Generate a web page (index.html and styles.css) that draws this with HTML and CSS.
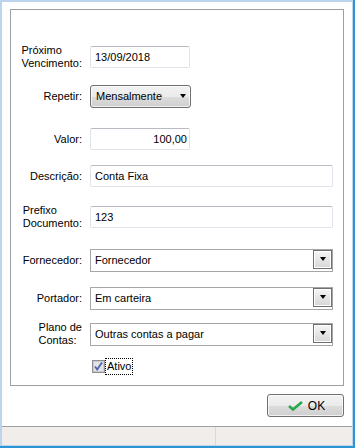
FILE: index.html
```html
<!DOCTYPE html>
<html lang="pt-BR">
<head>
  <meta charset="UTF-8" />
  <title>Conta Fixa</title>
  <link rel="stylesheet" href="styles.css">
</head>
<body>
  <div class="frame">
    <div class="window">

      <!-- Dados da conta -->
      <div class="group">
        <div class="row row-venc">
          <div class="label"><span>Próximo<br>Vencimento:</span></div>
          <div class="edit edit-short">13/09/2018</div>
        </div>

        <div class="row row-repetir">
          <div class="label"><span>Repetir:</span></div>
          <div class="dropbtn">
            <span>Mensalmente</span>
            <span class="arrow"></span>
          </div>
        </div>

        <div class="row row-valor">
          <div class="label"><span>Valor:</span></div>
          <div class="edit edit-short edit-right">100,00</div>
        </div>

        <div class="row row-desc">
          <div class="label"><span>Descrição:</span></div>
          <div class="edit">Conta Fixa</div>
        </div>

        <div class="row row-prefixo">
          <div class="label"><span>Prefixo<br>Documento:</span></div>
          <div class="edit">123</div>
        </div>

        <div class="row row-forn">
          <div class="label"><span>Fornecedor:</span></div>
          <div class="combo">
            <span class="combo-text">Fornecedor</span>
            <span class="combo-btn"><span class="arrow"></span></span>
          </div>
        </div>

        <div class="row row-port">
          <div class="label"><span>Portador:</span></div>
          <div class="combo">
            <span class="combo-text">Em carteira</span>
            <span class="combo-btn"><span class="arrow"></span></span>
          </div>
        </div>

        <div class="row row-plano">
          <div class="label"><span>Plano de<br>Contas:</span></div>
          <div class="combo">
            <span class="combo-text">Outras contas a pagar</span>
            <span class="combo-btn"><span class="arrow"></span></span>
          </div>
        </div>

        <div class="row row-check">
          <div class="label"></div>
          <div class="check">
            <svg class="check-box" width="13" height="13" viewBox="0 0 13 13">
              <rect x="0.5" y="0.5" width="12" height="12" fill="#f4f4f4" stroke="#8f8f8f"/>
              <rect x="1.5" y="1.5" width="10" height="10" fill="#e2e3e8" stroke="#c9cbd2"/>
              <path d="M3 6.5 L5.2 9.5 L10 2.5" fill="none" stroke="#4a63a8" stroke-width="1.8"/>
            </svg>
            <span class="check-label">Ativo</span>
          </div>
        </div>
      </div>

      <div class="actions">
        <button class="btn-ok">
          <svg width="15" height="10" viewBox="0 0 15 10">
            <path d="M1 5 L5 8.5 L14 1" fill="none" stroke="#27a84a" stroke-width="2.6"/>
          </svg>
          OK
        </button>
      </div>

      <div class="statusbar">
        <div class="panel panel-main"></div>
        <div class="panel"></div>
      </div>

    </div>
  </div>
</body>
</html>
```

FILE: styles.css
```css
html, body {
  margin: 0;
  padding: 0;
  background: #fff;
  font-family: "Liberation Sans", Arial, sans-serif;
  font-size: 11px;
  color: #000;
}

.frame {
  width: 355px;
  height: 448px;
  box-sizing: border-box;
  border-right: 2px solid #2b95d6;
  border-bottom: 2px solid #2b95d6;
}

.window {
  height: 100%;
  box-sizing: border-box;
  border: 2px solid #bcd4ec;
  border-right-width: 1px;
  border-bottom-width: 1px;
  display: flex;
  flex-direction: column;
  background: #fff;
}

.group {
  margin: 7px 0 0 8px;
  width: 334px;
  height: 377px;
  box-sizing: border-box;
  border: 1px solid #a0a0a0;
  padding: 36px 10px 0 0;
}

.row {
  display: flex;
  align-items: center;
  height: 22px;
}

.row-repetir { margin-top: 17px; }
.row-valor   { margin-top: 21px; }
.row-desc    { margin-top: 15px; }
.row-prefixo { margin-top: 19px; }
.row-forn    { margin-top: 21px; }
.row-port    { margin-top: 16px; }
.row-plano   { margin-top: 14px; }
.row-check   { margin-top: 10px; }

.label {
  width: 71px;
  flex: none;
  display: flex;
  justify-content: flex-end;
  margin-right: 8px;
  line-height: 13px;
}

.label span {
  text-align: left;
}

.edit {
  flex: 1;
  height: 22px;
  box-sizing: border-box;
  border: 1px solid #e0e3e9;
  border-top-color: #b8bbc2;
  border-radius: 2px;
  padding: 0 4px;
  line-height: 20px;
  white-space: nowrap;
}

.edit-short {
  flex: none;
  width: 100px;
}

.edit-right {
  text-align: right;
  padding-right: 2px;
}

.dropbtn {
  width: 101px;
  height: 23px;
  box-sizing: border-box;
  border: 1px solid #707070;
  border-radius: 3px;
  background: linear-gradient(#f2f2f2 0%, #ebebeb 50%, #dddddd 50%, #cfcfcf 100%);
  box-shadow: inset 0 0 0 1px rgba(255, 255, 255, 0.7);
  display: flex;
  align-items: center;
  justify-content: space-between;
  padding: 0 4px 0 5px;
}

.arrow {
  width: 0;
  height: 0;
  border-left: 3.5px solid transparent;
  border-right: 3.5px solid transparent;
  border-top: 4px solid #000;
}

.combo {
  flex: 1;
  height: 23px;
  box-sizing: border-box;
  border: 1px solid #a6a6a6;
  display: flex;
  align-items: flex-start;
  justify-content: space-between;
}

.combo-text {
  padding-left: 4px;
  line-height: 21px;
}

.combo-btn {
  width: 19px;
  height: 19px;
  box-sizing: border-box;
  border: 1px solid #6f6f6f;
  background: linear-gradient(#f6f6f6, #d6d6d6);
  box-shadow: inset 0 0 0 1px #fff;
  display: flex;
  align-items: center;
  justify-content: center;
}

.check {
  display: flex;
  align-items: center;
  margin-left: 2px;
}

.check-box {
  display: block;
}

.check-label {
  margin-left: 1px;
  padding: 1px 1px;
  line-height: 13px;
  outline: 1px dotted #000;
  outline-offset: 0;
}

.actions {
  display: flex;
  justify-content: flex-end;
  padding: 8px 8px 0 0;
}

.btn-ok {
  width: 77px;
  height: 23px;
  border: 1px solid #707070;
  border-radius: 3px;
  background: linear-gradient(#f2f2f2 0%, #ebebeb 50%, #dddddd 50%, #cfcfcf 100%);
  box-shadow: inset 0 0 0 1px rgba(255, 255, 255, 0.7);
  font-family: "Liberation Sans", Arial, sans-serif;
  font-size: 12px;
  color: #000;
  display: flex;
  align-items: center;
  justify-content: center;
  gap: 5px;
  padding: 0 0 0 2px;
}

.statusbar {
  margin-top: auto;
  height: 19px;
  box-sizing: border-box;
  border-top: 1px solid #a0a0a0;
  background: #f0edeb;
  display: flex;
}

.panel {
  flex: 1;
}

.panel-main {
  flex: none;
  width: 213px;
  border-right: 1px solid #dcd8d4;
}
```
